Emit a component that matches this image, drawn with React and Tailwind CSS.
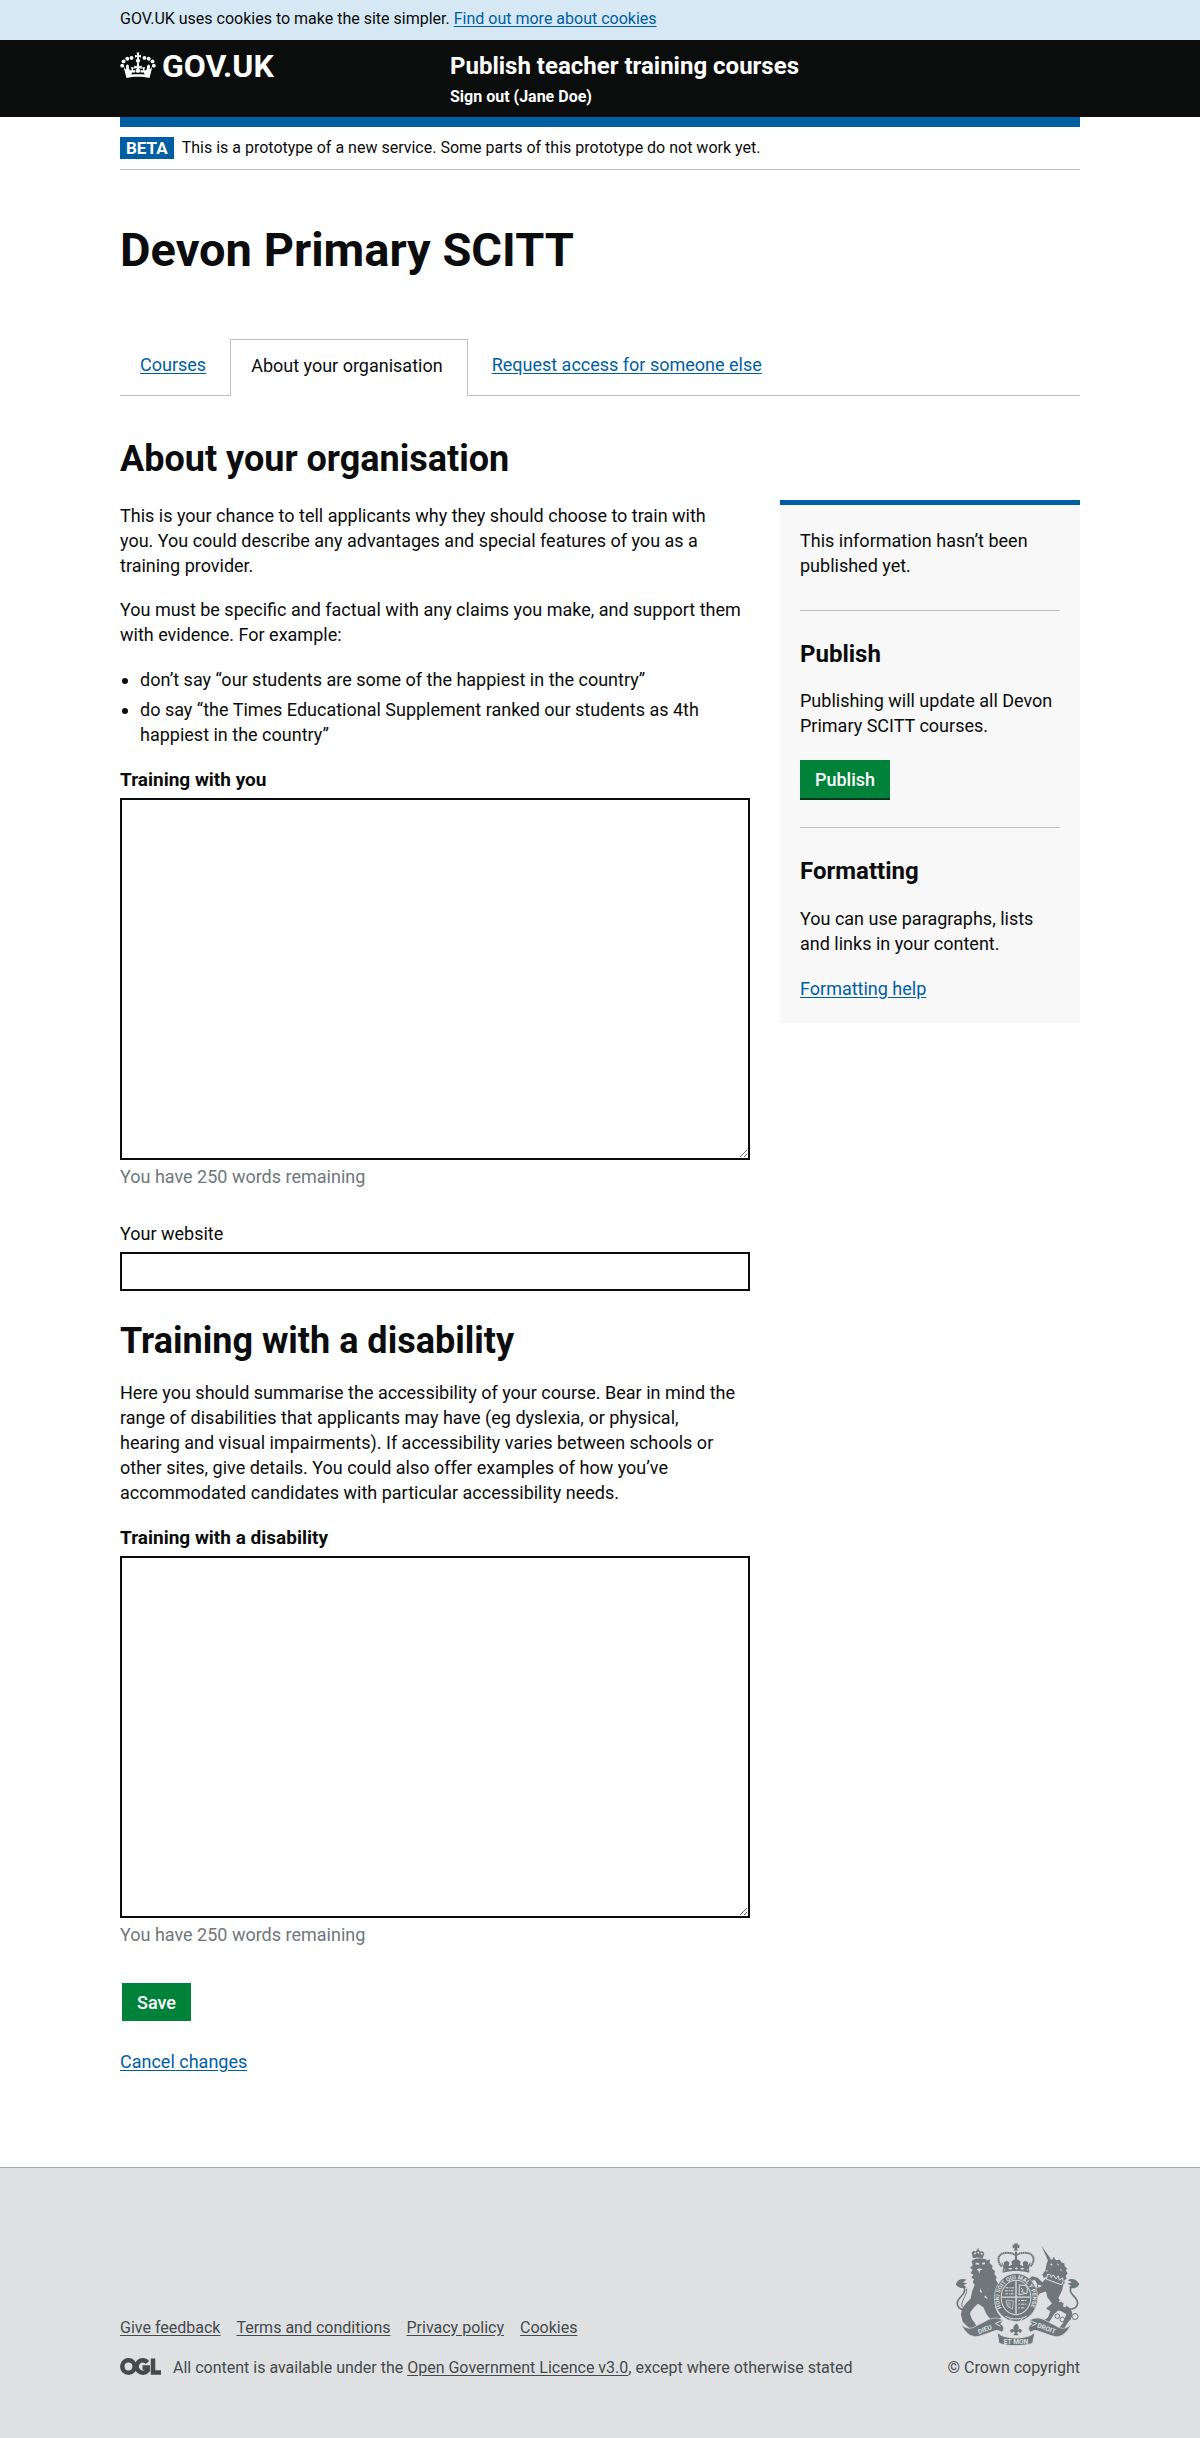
import React from 'react';

const link = 'text-[#005ea5] underline underline-offset-2 hover:text-[#2b8cc4]';
const footerLink = 'underline underline-offset-2 hover:text-[#171819]';
const field = 'block w-full rounded-none border-2 border-[#0b0c0c] bg-white p-1 text-lg leading-[25px]';
const button = 'bg-[#00823b] px-[15px] text-lg font-medium leading-[25px] text-white hover:bg-[#00692f]';

function Crown() {
  return (
    <svg width="36" height="26" viewBox="0 0 132 97" fill="currentColor" aria-hidden="true">
      {[0, 1].map((side) => (
        <g key={side} transform={side ? 'translate(132 0) scale(-1 1)' : undefined}>
          <circle cx="42" cy="22" r="7.2" />
          <circle cx="26" cy="25" r="7.2" />
          <circle cx="12" cy="35" r="7.2" />
          <circle cx="7" cy="51" r="7.2" />
          <path d="M14 62l9 35c14-4 28-5 43-5v-9c-9 0-17 0-25 1l4-8c4 2 8 2 11-1v-9c-3 3-6 3-9 1l4-10H39l4 10c-4 2-8 0-10-4l-1-12-6-5-5 5 1 13c-4 0-6-3-8-11z" />
        </g>
      ))}
      <circle cx="66" cy="33" r="8" />
      <path d="M62 27l1-9-8 3V10l8 3-2-11h10l-2 11 8-3v11l-8-3 1 9zM63 40h6l2 14 9-4v13l-9-4 4 17c-6 2-12 2-18 0l4-17-9 4V50l9 4z" />
    </svg>
  );
}

function RoyalArms() {
  return (
    <svg width="125" height="103" viewBox="15 14 375 308" fill="#6f777b" aria-hidden="true">
      {/* small crown on the lion */}
      <path d="M69 59l-4-16 6-6 6 2 5-5v-4h4v4l5 5 7-1 5 7-5 14c-9-3-19-3-29 0z" />
      <g fill="#dee0e2">
        <circle cx="75" cy="45" r="3" />
        <circle cx="85" cy="43" r="3" />
        <circle cx="95" cy="46" r="3" />
      </g>
      {/* lion */}
      <path d="M65 68C72 58 102 56 112 66L120 62 119 74 128 82 126 90 135 98 133 106 140 116 137 124 144 134 152 150 148 164 140 170 134 190 136 208 142 222 153 236 146 246 122 243 110 228 100 206 84 196C72 206 62 218 60 226L66 242 76 256 80 266 66 274 50 262 38 250 33 228 36 210 48 194 62 180 66 160 74 138 68 132 72 122 64 118 70 108 62 104 68 94 60 88 68 80z" />
      <g fill="#dee0e2">
        <path d="M77 72l11 2-1 5-10-1zM96 73l10-1-1 5-8 1zM80 93l8-4 10 4-8 3-2 9-3-9zM92 150l5 14-8-5zM106 170l8 12-11-6z" />
      </g>
      {/* tails */}
      <path d="M17 137C22 122 38 118 50 124L38 132 52 134 40 140 50 146C36 152 24 148 17 137zM388 137C381 122 364 117 353 125L366 131 352 136 364 142 356 147C371 153 382 148 388 137z" />
      <g fill="none" stroke="#6f777b" strokeWidth="5" strokeLinecap="round">
        <path d="M46 214C22 214 16 194 28 180 38 168 50 160 40 142" />
        <path d="M36 204C30 190 52 172 50 152" strokeWidth="3" />
        <path d="M358 212C384 212 388 192 376 178 366 166 354 158 366 142" />
      </g>

      {/* crown */}
      <path d="M194 20l-3-5h14l-3 6 6-3v12l-7-3 2 10h-11l2-10-6 3V18z" />
      <g fill="none" stroke="#6f777b" strokeWidth="6">
        <path d="M155 84c-18-20-10-41 15-41 15 0 25 3 28 10 3-7 13-10 28-10 25 0 33 21 15 41" strokeDasharray="5 1" />
        <path d="M198 40v38" />
      </g>
      <path d="M154 70l9 12-2-11 10-4 7 5-2 11 10-4-2-10 14-9 14 9-2 10 10 4-2-11 7-5 10 4-2 11 9-12-7 29c-24-6-48-6-72 0z" />
      <path d="M158 92c26-6 54-6 80 0v11c-26-7-54-7-80 0z" />
      <g fill="#dee0e2">
        <circle cx="164" cy="94" r="2" />
        <path d="M174 91l7-3 7 2-7 4zM194 90l5-4 5 4-5 4zM210 90l7-2 7 3-7 3z" />
        <circle cx="233" cy="94" r="2" />
      </g>

      {/* unicorn */}
      <path d="M274 22l28 39-8 5zM296 61l11 3 4-9 7 10 12-1 4 8 9 2 1 9 7 6-3 8 5 8-6 7 3 9-7 4 1 11-43-13-7-10-12 5-5-9 9-14 4-20z" />
      <path d="M290 118l44 13 7 4-5 22-11 21c5 8 11 16 24 23 14 9 20 19 17 33l-18 27-8 14-16-2 14-18 11-28-15-9-10-2-12 11-14 23-18 12-8-9 22-16 7-19-13-8 18-15-14-19-4-17-19 6-13 20-8-3 10-24-15 8-3-9 15-12 9 4 14-7-15-4-10-15-13 9-9-8 16-11 16 5 14 13z" />
      <g fill="#dee0e2">
        <circle cx="304" cy="78" r="3" />
        <path d="M285 97l10-2-5 5zM320 73l8 7-4 1zM331 91l7 5-7-1z" />
      </g>
      <path d="M293 107l9 3 2 7 6-8 8 12 7-9 3 13 10-7 1 11-4 10-46-17z" stroke="#dee0e2" strokeWidth="3" />
      <g fill="none" stroke="#6f777b" strokeWidth="3">
        <circle cx="269" cy="142" r="7" />
        <circle cx="322" cy="233" r="7" />
        <circle cx="337" cy="243" r="7" />
        <circle cx="355" cy="239" r="7" />
        <circle cx="375" cy="234" r="9" />
      </g>
      <g fill="#dee0e2">
        <circle cx="342" cy="170" r="5" />
        <circle cx="344" cy="201" r="5" />
        <circle cx="330" cy="188" r="3" />
      </g>

      {/* garter and shield */}
      <ellipse cx="198" cy="177" rx="65" ry="72" stroke="#dee0e2" strokeWidth="2" />
      <ellipse cx="198" cy="177" rx="46" ry="53" fill="#dee0e2" />
      <ellipse cx="198" cy="177" rx="43" ry="50" />
      <g fill="none" stroke="#dee0e2" strokeWidth="4">
        <path d="M198 128v98M156 176h84" />
        <path d="M167 148h25M165 157h27M166 166h26" strokeWidth="3" strokeDasharray="8 3 4 2" />
        <path d="M205 186h27M205 197h25M205 208h20" strokeWidth="3" strokeDasharray="5 3 9 2" />
        <path d="M206 139l20 2 6 8-1 15-24 5 1-28" strokeWidth="3" />
        <path d="M213 148l6 6-5 5 10 3" strokeWidth="3" />
        <path d="M168 185l22 2-3 25-15-9zM174 190l0 14M180 190l-1 18" strokeWidth="2" />
      </g>
      <path id="garter" d="M155 208A50 57 0 1 1 241 208" fill="none" />
      <text fill="#dee0e2" fontFamily="Roboto, sans-serif" fontSize="17" fontWeight="700">
        <textPath href="#garter">HONI SOIT QUI MAL Y PENSE</textPath>
      </text>
      <path d="M166 233c20 11 44 11 64 0M180 240l6 7M211 247l6-7" fill="none" stroke="#dee0e2" strokeWidth="3" />

      {/* ribbon */}
      <path d="M34 258c16 15 30 14 47 3l35-18c14-6 29-6 43 2l-7 12c10 5 12 15 4 24-9-6-18-7-28-2l-37 13c-24 8-43-4-57-34z" stroke="#dee0e2" strokeWidth="2" />
      <path d="M363 258c-16 15-30 14-47 3l-35-18c-14-6-29-6-43 2l7 12c-10 5-12 15-4 24 9-6 18-7 28-2l37 13c24 8 43-4 57-34z" stroke="#dee0e2" strokeWidth="2" />
      <path d="M141 281l14 10c28 10 58 10 86 0l14-10-7 34c-34 9-67 9-101 0z" stroke="#dee0e2" strokeWidth="3" />
      <path d="M156 246l-20 9 15 8M240 246l20 9-15 8" fill="none" stroke="#dee0e2" strokeWidth="3" />
      {/* fleur */}
      <path d="M199 255c11 9 8 15 3 22 6-9 15-6 13 2-2 6-8 4-8 0l-6 2 4 9h-14l4-9-6-2c0 4-7 6-8 0-2-8 8-11 13-2-5-7-7-13 5-22z" />
      <g fill="#dee0e2" fontFamily="Roboto, sans-serif" fontSize="20" fontWeight="700" textAnchor="middle">
        <text x="107" y="279" transform="rotate(-22 107 279)">DIEU</text>
        <text x="198" y="315">ET MON</text>
        <text x="287" y="276" transform="rotate(22 287 276)">DROIT</text>
      </g>
    </svg>
  );
}

function OglLogo() {
  return (
    <svg width="41" height="17" viewBox="0 0 41 17" fill="none" stroke="#454a4d" strokeWidth="4.5" aria-label="Open Government Licence" role="img">
      <circle cx="8.5" cy="8.5" r="6.2" />
      <path d="M27.5 4.5A6.2 6.2 0 1 0 27.7 12.3V9.5H22.5" />
      <path d="M33 0.5V14.5H41" />
    </svg>
  );
}

function EditorField({ id, label }) {
  return (
    <div className="mt-5">
      <label htmlFor={id} className="block text-[19px] font-bold leading-[25px]">{label}</label>
      <textarea id={id} rows={14} className={`${field} mt-1.5`} />
      <p className="mt-1 text-[#6f777b]">You have 250 words remaining</p>
    </div>
  );
}

const heading = 'text-4xl font-bold leading-10';

export default function App() {
  return (
    <div className="bg-white font-['Roboto',sans-serif] text-lg leading-[25px] text-[#0b0c0c]">
      <div className="bg-[#d5e8f3] pt-[9px] pb-[11px]">
        <p className="mx-auto max-w-[960px] text-base leading-5">
          GOV.UK uses cookies to make the site simpler. <a href="#cookies" className={link}>Find out more about cookies</a>
        </p>
      </div>

      <header className="bg-[#0b0c0c] text-white">
        <div className="mx-auto flex max-w-[960px] pt-2.5 pb-2">
          <a href="#home" className="flex w-[330px] items-start gap-1.5">
            <span className="pt-0.5"><Crown /></span>
            <span className="text-[32px] font-bold leading-8">GOV.UK</span>
          </a>
          <div className="font-bold">
            <a href="#service" className="block text-2xl leading-8">Publish teacher training courses</a>
            <a href="#sign-out" className="mt-0.5 block text-base leading-[25px]">Sign out (Jane Doe)</a>
          </div>
        </div>
      </header>

      <main className="mx-auto max-w-[960px]">
        <div className="border-t-10 border-[#005ea5]" />
        <div className="flex items-center gap-2 border-b border-[#bfc1c3] py-2.5 text-base leading-[22px]">
          <strong className="bg-[#005ea5] px-1.5 text-[17px] font-bold leading-[22px] text-white">BETA</strong>
          <span>This is a prototype of a new service. Some parts of this prototype do not work yet.</span>
        </div>

        <h1 className="mt-[55px] mb-16 text-[47px] font-bold leading-[50px]">Devon Primary SCITT</h1>

        <nav className="flex h-[57px] border-b border-[#bfc1c3] leading-[52px]">
          <a href="#courses" className={`${link} px-5`}>Courses</a>
          <a href="#about" aria-current="page" className="-mb-px ml-1 border border-b-0 border-[#bfc1c3] bg-white pr-6 pl-5">About your organisation</a>
          <a href="#request" className={`${link} ml-1 px-5`}>Request access for someone else</a>
        </nav>

        <div className="mt-[43px] flex items-start gap-[30px]">
          <form className="min-w-0 flex-1" onSubmit={(e) => e.preventDefault()}>
            <h2 className={heading}>About your organisation</h2>
            <p className="mt-6 pr-6">
              This is your chance to tell applicants why they should choose to train with you. You could describe any advantages and special features of you as a training provider.
            </p>
            <p className="mt-[19px]">
              You must be specific and factual with any claims you make, and support them with evidence. For example:
            </p>
            <ul className="mt-5 list-disc space-y-[5px] pl-5">
              <li>don’t say “our students are some of the happiest in the country”</li>
              <li>do say “the Times Educational Supplement ranked our students as 4th happiest in the country”</li>
            </ul>

            <EditorField id="training" label="Training with you" />

            <label htmlFor="website" className="mt-8 block">Your website</label>
            <input id="website" type="url" className={`${field} mt-1.5 h-[39px]`} />

            <h2 className={`${heading} mt-[30px]`}>Training with a disability</h2>
            <p className="mt-[19px] pr-3">
              Here you should summarise the accessibility of your course. Bear in mind the range of disabilities that applicants may have (eg dyslexia, or physical, hearing and visual impairments). If accessibility varies between schools or other sites, give details. You could also offer examples of how you’ve accommodated candidates with particular accessibility needs.
            </p>

            <EditorField id="disability" label="Training with a disability" />

            <button type="submit" className={`${button} mt-9 ml-0.5 block h-[38px]`}>Save</button>
            <p className="mt-7"><a href="#cancel" className={link}>Cancel changes</a></p>
          </form>

          <aside className="mt-[61px] w-[300px] border-t-5 border-[#005ea5] bg-[#f8f8f8] px-5 pt-[23px] pb-[22px]">
            <p>This information hasn’t been published yet.</p>
            <hr className="mt-8 border-[#bfc1c3]" />
            <h3 className="mt-7 text-2xl font-bold leading-[30px]">Publish</h3>
            <p className="mt-[19px]">Publishing will update all Devon Primary SCITT courses.</p>
            <button type="button" className={`${button} mt-[22px] block h-10 border-b-2 border-[#003618]`}>Publish</button>
            <hr className="mt-[27px] border-[#bfc1c3]" />
            <h3 className="mt-7 text-2xl font-bold leading-[30px]">Formatting</h3>
            <p className="mt-5">You can use paragraphs, lists and links in your content.</p>
            <p className="mt-5"><a href="#formatting" className={link}>Formatting help</a></p>
          </aside>
        </div>
      </main>

      <footer className="mt-[93px] border-t border-[#a1acb2] bg-[#dee0e2] pt-[75px] pb-[60px] text-base leading-5 text-[#454a4d]">
        <div className="mx-auto flex max-w-[960px] items-end justify-between">
          <div>
            <ul className="flex gap-4">
              <li><a href="#feedback" className={footerLink}>Give feedback</a></li>
              <li><a href="#terms" className={footerLink}>Terms and conditions</a></li>
              <li><a href="#privacy" className={footerLink}>Privacy policy</a></li>
              <li><a href="#cookie-policy" className={footerLink}>Cookies</a></li>
            </ul>
            <div className="mt-5 flex items-start gap-3">
              <OglLogo />
              <p>
                All content is available under the <a href="#licence" className={footerLink}>Open Government Licence v3.0</a>, except where otherwise stated
              </p>
            </div>
          </div>
          <a href="#copyright" className="flex flex-col items-end gap-3">
            <RoyalArms />
            <span className="leading-5">© Crown copyright</span>
          </a>
        </div>
      </footer>
    </div>
  );
}
